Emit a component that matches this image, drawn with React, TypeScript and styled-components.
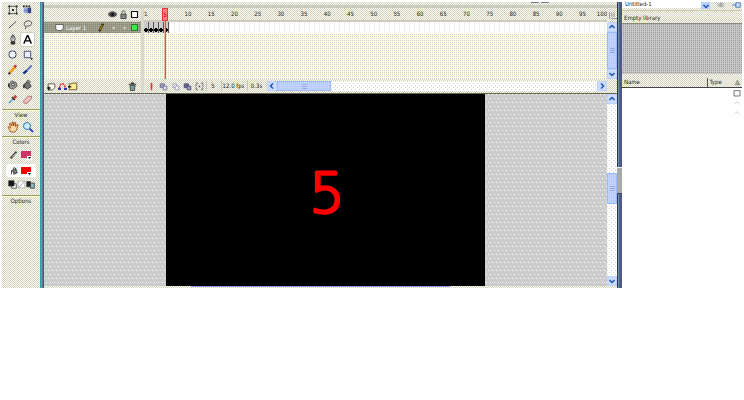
import React from "react";
import styled, { createGlobalStyle, css } from "styled-components";

const face = css`
  background-color: #e6e6d9;
  background-image: conic-gradient(#ffffff 25%, #d0d0c8 0 50%, #ffffdc 0 75%, #d0d0c8 0);
  background-size: 2px 2px;
`;
const paper = css`
  background-color: #ffffff;
  background-image: conic-gradient(#ffffff 25%, #ffffd6 0 50%, #d2d2cc 0 75%, #ffffe4 0);
  background-size: 2px 2px;
`;
const gutter = css`
  background-color: #ffffff;
  background-image: conic-gradient(at 1px 1px, transparent 75%, #d0d0d4 0), conic-gradient(at 1px 1px, transparent 75%, #d0d0d4 0);
  background-size: 4px 4px;
  background-position: 0 0, 2px 2px;
`;
const blue = css`
  background-color: #bfd5fd;
  background-image: conic-gradient(#a9c6ff 25%, transparent 0 50%, #ccccff 0 75%, transparent 0);
  background-size: 2px 2px;
`;

const Global = createGlobalStyle`
  *, *::before, *::after { box-sizing: border-box; }
  body { margin: 0; background: #fff; color: #222; font-family: "DejaVu Sans Condensed", "DejaVu Sans", sans-serif; font-size: 6px; line-height: 8px; }
  button, select { font: inherit; color: inherit; border: 0; padding: 0; margin: 0; background: none; border-radius: 0; }
  svg { display: block; flex: none; }
`;

const Window = styled.main`
  display: flex;
  margin: 2px 2px 0;
  height: 286px;
`;
const Edge = styled.div<{ $tone: "left" | "right" }>`
  flex: none;
  width: ${(p) => (p.$tone === "left" ? 4 : 5)}px;
  display: flex;
  flex-direction: column;
  justify-content: center;
  padding-top: 70px;
  background: ${(p) =>
    p.$tone === "left"
      ? "linear-gradient(90deg, #339999 1px, #7799bb 1px 2px, #666699 2px 3px, #336666 3px)"
      : "linear-gradient(90deg, #333366 1px, #669999 1px 2px, #446688 2px 3px, #555588 3px)"};
`;
const Grip = styled.div`
  height: 27px;
  background: #a6aaa8;
  border-top: 1px solid #eee;
  border-bottom: 1px solid #444;
`;

/* Tools */
const Tools = styled.aside`
  ${face}
  flex: none;
  width: 38px;
`;
const ToolGrid = styled.div`
  display: grid;
  grid-template-columns: 15px 15px;
  grid-auto-rows: 15px;
  padding-left: 3px;
`;
const ToolButton = styled.button<{ $on?: boolean }>`
  display: grid;
  place-items: center;
  ${(p) => p.$on && "background: #fff; border: 1px solid #d0d0c0; border-radius: 2px;"}
`;
const Section = styled.section`
  border-top: 1px solid #999966;
  box-shadow: inset 0 1px #ffffcc;
  margin-top: 2px;
`;
const Heading = styled.h2`
  margin: 0;
  padding-top: 1px;
  font: inherit;
  text-align: center;
  height: 9px;
`;
const ColorRow = styled.button<{ $on?: boolean }>`
  display: flex;
  align-items: center;
  justify-content: space-between;
  width: 30px;
  height: 13px;
  margin: 2px 0 3px 4px;
  padding: 0 4px 0 3px;
  border-radius: 2px;
  background: ${(p) => (p.$on ? "#fff" : "transparent")};
`;
const Swaps = styled.div`
  display: flex;
  justify-content: space-between;
  padding: 0 5px 4px 6px;
`;
const SwapButton = styled.button`
  width: 9px;
  height: 9px;
`;

/* Document */
const Doc = styled.section`
  flex: 1;
  min-width: 0;
  display: flex;
  flex-direction: column;
`;
const TopStrip = styled.div`
  ${face}
  height: 6px;
  border-bottom: 3px solid #ccccbe;
  display: flex;
  justify-content: flex-end;
  padding-right: 66px;
`;
const StripMark = styled.i`
  width: 8px;
  height: 1px;
  margin-right: 2px;
  background: #777799;
`;
const Timeline = styled.div`
  height: 86px;
  display: flex;
  border-bottom: 1px solid #666655;
`;
const Layers = styled.div`
  flex: none;
  width: 100px;
  display: flex;
  flex-direction: column;
  border-right: 3px solid #d8d8cc;
`;
const LayerHead = styled.div`
  ${face}
  height: 14px;
  border-bottom: 1px solid #ccccbb;
  display: flex;
  align-items: center;
  justify-content: flex-end;
  gap: 2px;
  padding-right: 2px;
`;
const LayerRow = styled.div`
  height: 11px;
  display: flex;
  align-items: center;
  padding: 0 2px 0 11px;
  color: #fff;
  background-color: #999988;
  background-image: conic-gradient(#888877 25%, transparent 0 50%, #aaaa99 0 75%, transparent 0);
  background-size: 2px 2px;
`;
const LayerName = styled.span`
  flex: 1;
  padding-left: 2px;
`;
const LayerDots = styled.span`
  width: 24px;
  padding-left: 2px;
  display: flex;
  justify-content: space-around;
`;
const Fill = styled.div`
  ${paper}
  flex: 1;
`;
const Bar = styled.div<{ $end?: boolean }>`
  ${face}
  height: 14px;
  flex: none;
  display: flex;
  align-items: center;
  padding-left: 2px;
  padding-right: ${(p) => (p.$end ? 10 : 0)}px;
  gap: ${(p) => (p.$end ? 2 : 1)}px;
`;
const BarButton = styled.button<{ $end?: boolean }>`
  width: 10px;
  height: 10px;
  display: grid;
  place-items: center;
  ${(p) => p.$end && "margin-left: auto; margin-right: 4px;"}
`;
const Frames = styled.div`
  flex: 1;
  min-width: 0;
  display: flex;
  flex-direction: column;
`;
const FrameArea = styled.div`
  flex: 1;
  min-height: 0;
  display: flex;
`;
const FrameMain = styled.div`
  flex: 1;
  min-width: 0;
  display: flex;
  flex-direction: column;
  position: relative;
  overflow: hidden;
`;
const Ruler = styled.div`
  ${face}
  height: 14px;
  border-bottom: 2px solid #ccccbe;
  display: flex;
  align-items: center;
  overflow: hidden;
`;
const Tick = styled.span<{ $w?: number; $last?: boolean }>`
  ${(p) => (p.$w ? `flex: 0 0 ${p.$w}px;` : "flex: 1;")}
  text-align: ${(p) => (p.$last ? "right" : "center")};
  white-space: nowrap;
`;
const FrameRow = styled.div`
  height: 11px;
  display: flex;
  background-color: #fff;
  background-image: repeating-linear-gradient(90deg, #f0f0ea 0 1px, transparent 1px 5px);
`;
const Keyframe = styled.i`
  flex: none;
  width: 5px;
  height: 11px;
  border-right: 1px solid #555;
  background: radial-gradient(circle at 2px 8px, #000 2px, transparent 2px) #ccc;
`;
const Playhead = styled.div`
  position: absolute;
  left: 18px;
  top: 0;
  bottom: 0;
  width: 6px;
  color: #a00;
  display: flex;
  flex-direction: column;
  align-items: center;
`;
const PlayTag = styled.span`
  width: 6px;
  height: 13px;
  border: 1px solid #e33;
  background: #ff8080;
  display: grid;
  place-items: center;
`;
const PlayLine = styled.i`
  flex: 1;
  width: 2px;
  background: linear-gradient(90deg, #ffaaaa 1px, #ff4444 1px);
`;
const VScroll = styled.div`
  flex: none;
  width: 10px;
  display: flex;
  flex-direction: column;
  ${gutter}
`;
const Corner = styled.div`
  ${face}
  height: 14px;
  display: grid;
  place-items: center;
`;
const ScrollButton = styled.button`
  flex: none;
  width: 10px;
  height: 10px;
  display: grid;
  place-items: center;
  background: #c9dcff;
  border: 1px solid #c0d2f8;
`;
const Thumb = styled.div<{ $w?: number; $h?: number }>`
  ${blue}
  flex: ${(p) => (p.$w || p.$h ? "none" : "1")};
  ${(p) => p.$w && `width: ${p.$w}px; height: 10px;`}
  ${(p) => p.$h && `height: ${p.$h}px;`}
  border: 1px solid #99bbff;
  display: grid;
  place-items: center;
`;
const Spacer = styled.div<{ $n: number }>`
  flex: ${(p) => p.$n};
`;
const Cell = styled.span<{ $w: number }>`
  width: ${(p) => p.$w}px;
  height: 10px;
  line-height: 10px;
  text-align: center;
  white-space: nowrap;
  border-left: 1px solid #c4c4b4;
`;
const HScroll = styled.div`
  ${gutter}
  flex: 1;
  height: 10px;
  display: flex;
  justify-content: space-between;
`;
const HGroup = styled.div`
  display: flex;
`;
const StageRow = styled.div`
  flex: 1;
  min-height: 0;
  display: flex;
`;
const Pasteboard = styled.div`
  flex: 1;
  display: flex;
  justify-content: center;
  background-color: #cccccc;
  background-image: conic-gradient(at 1px 1px, transparent 75%, #fff 0), conic-gradient(at 1px 1px, transparent 75%, #fff 0);
  background-size: 4px 8px;
  background-position: 0 0, 2px 4px;
`;
const Stage = styled.div`
  width: 56.5%;
  background: #000;
  display: grid;
  place-items: center;
`;
const StageArt = styled.svg`
  width: 60px;
  height: 80px;
`;
const StageText = styled.text`
  font: 200 56px "DejaVu Sans", sans-serif;
  text-anchor: middle;
  fill: #ff0000;
  stroke: #ff0000;
  stroke-width: 3px;
  stroke-linejoin: round;
`;
const Foot = styled.div`
  flex: none;
  height: 2px;
  ${face}
  display: flex;
  justify-content: center;
  padding-right: 20px;
`;
const FootThumb = styled.i`
  width: 47%;
  height: 1px;
  background: #8899ff;
`;

/* Library */
const Library = styled.aside`
  flex: none;
  width: 120px;
  display: flex;
  flex-direction: column;
`;
const LibTop = styled.div`
  ${face}
  height: 8px;
  display: flex;
  align-items: flex-start;
  gap: 7px;
  overflow: hidden;
`;
const DocSelect = styled.select`
  appearance: none;
  flex: none;
  width: 88px;
  height: 8px;
  margin-top: -2px;
  padding-left: 3px;
  background: #fff;
`;
const DropMark = styled.span`
  flex: none;
  margin-left: -16px;
  width: 9px;
  height: 7px;
  display: grid;
  place-items: center;
  background: #b8d0ff;
`;
const LibTitle = styled.div`
  ${face}
  height: 13px;
  line-height: 13px;
  padding-left: 2px;
  border-top: 1px solid #ccccaa;
`;
const Preview = styled.div`
  height: 51px;
  background-color: #c8c8c8;
  background-image: conic-gradient(#999 25%, transparent 0);
  background-size: 2px 2px;
  border-top: 1px solid #888;
`;
const Gap = styled.div`
  ${face}
  height: 4px;
`;
const ItemTable = styled.table`
  border-collapse: collapse;
  table-layout: fixed;
  width: 100%;
`;
const Th = styled.th<{ $w?: number }>`
  ${face}
  ${(p) => p.$w && `width: ${p.$w}px;`}
  height: 9px;
  padding: 0 0 0 2px;
  font-weight: 400;
  text-align: left;
  border-bottom: 1px solid #444;
  & + & { border-left: 1px solid #555; }
  & + & + & { border-left: 0; }
`;
const LibSide = styled.div`
  align-self: flex-end;
  width: 10px;
  display: flex;
  flex-direction: column;
  align-items: center;
`;
const SideButton = styled.button`
  width: 10px;
  height: 10px;
  display: grid;
  place-items: center;
`;

type Art = { d: React.ReactNode; s?: number };
const Icon = ({ d, s = 12 }: Art) => (
  <svg width={s} height={s} viewBox="0 0 12 12" fill="none" stroke="#333" strokeWidth="1" aria-hidden="true">{d}</svg>
);
const Chevron = ({ dir }: { dir: "up" | "down" | "left" | "right" }) => {
  const paths = { up: "M1.5 5 4 2.5 6.5 5", down: "M1.5 3 4 5.5 6.5 3", left: "M5 1.5 2.5 4 5 6.5", right: "M3 1.5 5.5 4 3 6.5" };
  return <svg width="8" height="8" viewBox="0 0 8 8" fill="none" stroke="#2255aa" strokeWidth="1.5" aria-hidden="true"><path d={paths[dir]} /></svg>;
};
const GripMark = () => (
  <svg width="5" height="5" viewBox="0 0 5 5" stroke="#99aadd" aria-hidden="true"><path d="M0 .5h5M0 2.5h5M0 4.5h5" /></svg>
);

const tools: { name: string; d: React.ReactNode }[] = [
  { name: "Free transform", d: <><rect x="2.5" y="2.5" width="8" height="8" stroke="#555" /><path d="M1.500 1.500h2v2h-2zM9.500 1.500h2v2h-2zM1.500 9.500h2v2h-2zM9.500 9.500h2v2h-2zM5.500 5.500h2v2h-2z" fill="#222" stroke="none" /></> },
  { name: "Fill transform", d: <><path d="M2 4h4v6H2z" fill="#99aadd" stroke="none" /><path d="M6 4h4v6H6z" fill="#334488" stroke="none" /><path d="M1 2.500h2M4 2.500h2M7 2.500h2" stroke="#222" strokeWidth="2" /><path d="M2 7h4" stroke="#6677cc" /></> },
  { name: "Line", d: <path d="M2 10 10 2.500" /> },
  { name: "Lasso", d: <path d="M3.500 8C1 6 3 2 7 2s5 4 1 5.500c-2 .7-4-.5-4 .5s1 1-.5 3" stroke="#444" /> },
  { name: "Pen", d: <><path d="M6 1 4 5l1 3h3l1-3-2-4z" fill="#eee" /><path d="M6.500 2v4" /><path d="M4.500 8.500h4v2.500h-4z" fill="#333" /></> },
  { name: "Text", d: <path d="M2 10.500 5.800 1.800h.7l3.700 8.700M3.800 7.500h4.800" stroke="#000" strokeWidth="1.500" /> },
  { name: "Oval", d: <circle cx="6" cy="6" r="4" fill="#eef7ff" stroke="#335" /> },
  { name: "Rectangle", d: <><path d="M2.500 2.500h7v7h-7z" fill="#e6f0ff" stroke="#446" /><path d="M9 10h3l-1.500 2z" fill="#000" stroke="none" /></> },
  { name: "Pencil", d: <><path d="m3 9.500 5.500-6" stroke="#f0a020" strokeWidth="3" /><path d="m8 3.500 2-2" stroke="#c33" strokeWidth="3" /><path d="m1.500 11 2-1.500" stroke="#222" strokeWidth="2" /></> },
  { name: "Brush", d: <><path d="m5.500 7 5-5.500" stroke="#5577bb" strokeWidth="2" /><path d="m1.500 10.500 4-3.500" stroke="#113388" strokeWidth="2.500" /></> },
  { name: "Ink bottle", d: <><path d="m2 6 3-4 5 2 1 4-4 3-4-1z" fill="#999" stroke="#555" /><circle cx="6.500" cy="6" r="1.500" fill="#eee" /><path d="M2 5v4" stroke="#222" strokeWidth="1.500" /></> },
  { name: "Paint bucket", d: <><path d="m3 5 4-2 3 5-4 3-3-2z" fill="#777" /><path d="M5 4c0-4 4-3 4 0" /><path d="M2 6v4" stroke="#222" strokeWidth="1.500" /></> },
  { name: "Eyedropper", d: <><path d="m2 10 5-5" stroke="#66aacc" strokeWidth="2" /><path d="m5.500 3.500 3 3" stroke="#522" strokeWidth="2" /><path d="m8 4 2-2" stroke="#c33" strokeWidth="3" /></> },
  { name: "Eraser", d: <path d="m1.500 8 5-5.500h4L10 5 5.500 10h-3z" fill="#f4c4c4" stroke="#aa6666" /> },
];
const views = [
  { name: "Hand", d: <path d="M4 11 1 6.500l1-.8 1.500 1.500L2.500 2.500l1-.5L5 5l.2-4h1L6.700 5l1-3.500 1 .3L8.500 5.500l1.500-2 1 .5-1.500 5-1.500 2z" fill="#ffd8a8" stroke="#a65a22" /> },
  { name: "Zoom", d: <><path d="m7.500 7.500 3.500 3.500" stroke="#3344cc" strokeWidth="2" /><circle cx="5" cy="5" r="3.500" fill="#cceeff" stroke="#3377aa" /></> },
];
const swatch = (c: string) => <svg width="11" height="10" viewBox="0 0 11 10" aria-hidden="true"><path d="M0 1h10v7H0z" fill={c} /><path d="M6 6h5v4H6z" fill="#fff" /><path d="M7 7h3L8.500 9z" fill="#000" /></svg>;

const marks = Array.from({ length: 19 }, (_, i) => String(10 + i * 5));
const onion = [
  { name: "Center frame", d: <><path d="M6 1v10" stroke="#e33" strokeWidth="2" /><path d="M4 5h4" stroke="#e33" /></> },
  { name: "Onion skin", d: <><path d="M1.500 2.500h6v5h-6z" fill="#99a" stroke="#669" /><path d="M5.500 5.500h5v5h-5z" fill="#ddf" stroke="#669" /></> },
  { name: "Onion skin outlines", d: <><path d="M2.500 2.500h5v5h-5z" stroke="#99b" /><path d="M5.500 5.500h5v5h-5z" fill="#fff" stroke="#88a" /></> },
  { name: "Edit multiple frames", d: <><path d="M1.500 2.500h6v5h-6z" fill="#668" stroke="#447" /><path d="M5.500 5.500h5v5h-5z" fill="#99b" stroke="#447" /></> },
  { name: "Modify onion markers", d: <><path d="M4 1.500H1.500v9H4M8 1.500h2.500v9H8" stroke="#333" strokeDasharray="3 1" /><path d="M5 5h2v2H5z" fill="#333" stroke="none" /></> },
];

export default function App() {
  return (
    <>
      <Global />
      <Window>
        <Tools aria-label="Tools">
          <ToolGrid>
            {tools.map((t) => <ToolButton key={t.name} aria-label={t.name} $on={t.name === "Text"}><Icon s={11} d={t.d} /></ToolButton>)}
          </ToolGrid>
          <Section>
            <Heading>View</Heading>
            <ToolGrid>{views.map((t) => <ToolButton key={t.name} aria-label={t.name}><Icon d={t.d} /></ToolButton>)}</ToolGrid>
          </Section>
          <Section>
            <Heading>Colors</Heading>
            <ColorRow aria-label="Stroke color"><Icon s={10} d={<><path d="m2 10 7-8" stroke="#444" strokeWidth="2.500" /><path d="m4 8 4-4" stroke="#bbb" /></>} />{swatch("#cc3366")}</ColorRow>
            <ColorRow $on aria-label="Fill color"><Icon s={10} d={<><path d="m4 5 4-2 2 5-4 2z" fill="#777" /><path d="M3 5v5M5 4c0-3 3-3 3 0" /></>} />{swatch("#ff0000")}</ColorRow>
            <Swaps>
              <SwapButton aria-label="Black and white"><Icon s={9} d={<><path d="M5 5h6v6H5z" fill="#fff" /><path d="M1 1h7v7H1z" fill="#111" /></>} /></SwapButton>
              <SwapButton aria-label="No color"><Icon s={9} d={<><path d="M1.500 1.500h9v9h-9z" stroke="#aaa" fill="#fff" /><path d="m2 10 8-8" stroke="#888" /></>} /></SwapButton>
              <SwapButton aria-label="Swap colors"><Icon s={9} d={<><path d="M1 2h5v7H1z" fill="#222" /><path d="M6 4h5v7H6z" fill="#8bb" /></>} /></SwapButton>
            </Swaps>
          </Section>
          <Section><Heading>Options</Heading></Section>
        </Tools>
        <Edge $tone="left" />
        <Doc>
          <TopStrip><StripMark /><StripMark /></TopStrip>
          <Timeline>
            <Layers>
              <LayerHead>
                <Icon s={9} d={<><path d="M0 6c3-5 9-5 12 0-3 4-9 4-12 0z" fill="#555" /><circle cx="6" cy="6" r="2" fill="#000" /></>} />
                <Icon s={9} d={<><path d="M2.500 5.500h7v6h-7z" fill="#888" /><path d="M4 5V3c0-3 4-3 4 0v2" /></>} />
                <Icon s={9} d={<path d="M2 2h8v8H2z" fill="#fff" stroke="#111" strokeWidth="1.500" />} />
              </LayerHead>
              <LayerRow>
                <Icon s={9} d={<path d="M1 2h10v5l-3 3H3l-2-2z" fill="#fff" stroke="#444" />} />
                <LayerName>Layer 1</LayerName>
                <Icon s={9} d={<><path d="M3 11 8 1" stroke="#332200" strokeWidth="3" /><path d="M4 9 7 3" stroke="#ffcc44" /></>} />
                <LayerDots><span>•</span><span>•</span></LayerDots>
                <Icon s={9} d={<path d="M2 2h8v8H2z" fill="#33ee44" stroke="#225522" strokeWidth="1" />} />
              </LayerRow>
              <Fill />
              <Bar>
                <BarButton aria-label="Insert layer"><Icon s={9} d={<><path d="M1.500 2.500h9v5l-3 3h-6z" fill="#ffe" stroke="#333" /><path d="M0 8h5M2.500 6v5" stroke="#000" strokeWidth="1.500" /></>} /></BarButton>
                <BarButton aria-label="Add motion guide"><Icon s={9} d={<><path d="M2 9C2 0 9 0 10 9" stroke="#e33" strokeDasharray="3 1" strokeWidth="2" /><path d="M0 9h4M8 9h4" stroke="#33a" strokeWidth="3" /></>} /></BarButton>
                <BarButton aria-label="Insert layer folder"><Icon s={10} d={<><path d="M1.500 3.500h3l1-1h5v8h-9z" fill="#ffee99" stroke="#554411" /><path d="M0 7h4" stroke="#000" strokeWidth="1.500" /></>} /></BarButton>
                <BarButton $end aria-label="Delete layer"><Icon s={9} d={<><path d="M2.500 4.500h7l-1 7h-5z" fill="#799" /><path d="M1 3h10M4 1.500h4" strokeWidth="1.500" /></>} /></BarButton>
              </Bar>
            </Layers>
            <Frames>
              <FrameArea>
                <FrameMain>
                  <Ruler>
                    <Tick $w={3}>1</Tick>
                    <Tick $w={29} />
                    {marks.map((m, i) => i < 18 ? <Tick key={m}>{m}</Tick> : <Tick key={m} $w={13} $last>{m}</Tick>)}
                  </Ruler>
                  <FrameRow>{[1, 2, 3, 4, 5].map((n) => <Keyframe key={n} />)}</FrameRow>
                  <Fill />
                  <Playhead><PlayTag>5</PlayTag><PlayLine /></Playhead>
                </FrameMain>
                <VScroll>
                  <Corner><Icon s={9} d={<path d="M2 2v8M5 2v6M8 2v6M4 10h8" stroke="#777" />} /></Corner>
                  <ScrollButton aria-label="Scroll timeline up"><Chevron dir="up" /></ScrollButton>
                  <Thumb><GripMark /></Thumb>
                  <ScrollButton aria-label="Scroll timeline down"><Chevron dir="down" /></ScrollButton>
                </VScroll>
              </FrameArea>
              <Bar $end>
                {onion.map((o) => <BarButton key={o.name} aria-label={o.name}><Icon s={9} d={o.d} /></BarButton>)}
                <Cell $w={13}>5</Cell>
                <Cell $w={24}>12.0 fps</Cell>
                <Cell $w={18}>0.3s</Cell>
                <HScroll>
                  <HGroup><ScrollButton aria-label="Scroll frames left"><Chevron dir="left" /></ScrollButton><Thumb $w={54}><GripMark /></Thumb></HGroup>
                  <ScrollButton aria-label="Scroll frames right"><Chevron dir="right" /></ScrollButton>
                </HScroll>
              </Bar>
            </Frames>
          </Timeline>
          <StageRow>
            <Pasteboard>
              <Stage>
                <StageArt viewBox="0 0 60 80"><StageText x="31" y="62">5</StageText></StageArt>
              </Stage>
            </Pasteboard>
            <VScroll>
              <ScrollButton aria-label="Scroll stage up"><Chevron dir="up" /></ScrollButton>
              <Spacer $n={69} />
              <Thumb $h={31}><GripMark /></Thumb>
              <Spacer $n={72} />
              <ScrollButton aria-label="Scroll stage down"><Chevron dir="down" /></ScrollButton>
            </VScroll>
          </StageRow>
          <Foot><FootThumb /></Foot>
        </Doc>
        <Edge $tone="right"><Grip /></Edge>
        <Library aria-label="Library">
          <LibTop>
            <DocSelect aria-label="Document"><option>Untitled-1</option></DocSelect>
            <DropMark><Chevron dir="down" /></DropMark>
            <Icon s={8} d={<path d="M1 3h10M1 6h10M6 0v8" stroke="#778" />} />
            <Icon s={9} d={<path d="M0 4h6M5 1h6v6H5z" stroke="#3366aa" fill="#cdf" />} />
          </LibTop>
          <LibTitle>Empty library</LibTitle>
          <Preview />
          <Gap />
          <ItemTable>
            <thead><tr><Th>Name</Th><Th $w={25}>Type</Th><Th $w={10} aria-label="Sort"><Icon s={7} d={<path d="m6 2 4 8H2z" fill="#aa9" stroke="#776" />} /></Th></tr></thead>
          </ItemTable>
          <LibSide>
            <SideButton aria-label="Wide view"><Icon s={8} d={<path d="M1.500 2.500h9v8h-9z" stroke="#333" strokeWidth="1" fill="#fff" />} /></SideButton>
            <SideButton aria-label="Scroll up"><Icon s={8} d={<path d="m2 8 4-4 4 4" stroke="#bba" />} /></SideButton>
            <SideButton aria-label="Scroll list"><Icon s={8} d={<path d="m2 8 4-4 4 4" stroke="#bba" />} /></SideButton>
          </LibSide>
        </Library>
      </Window>
    </>
  );
}
